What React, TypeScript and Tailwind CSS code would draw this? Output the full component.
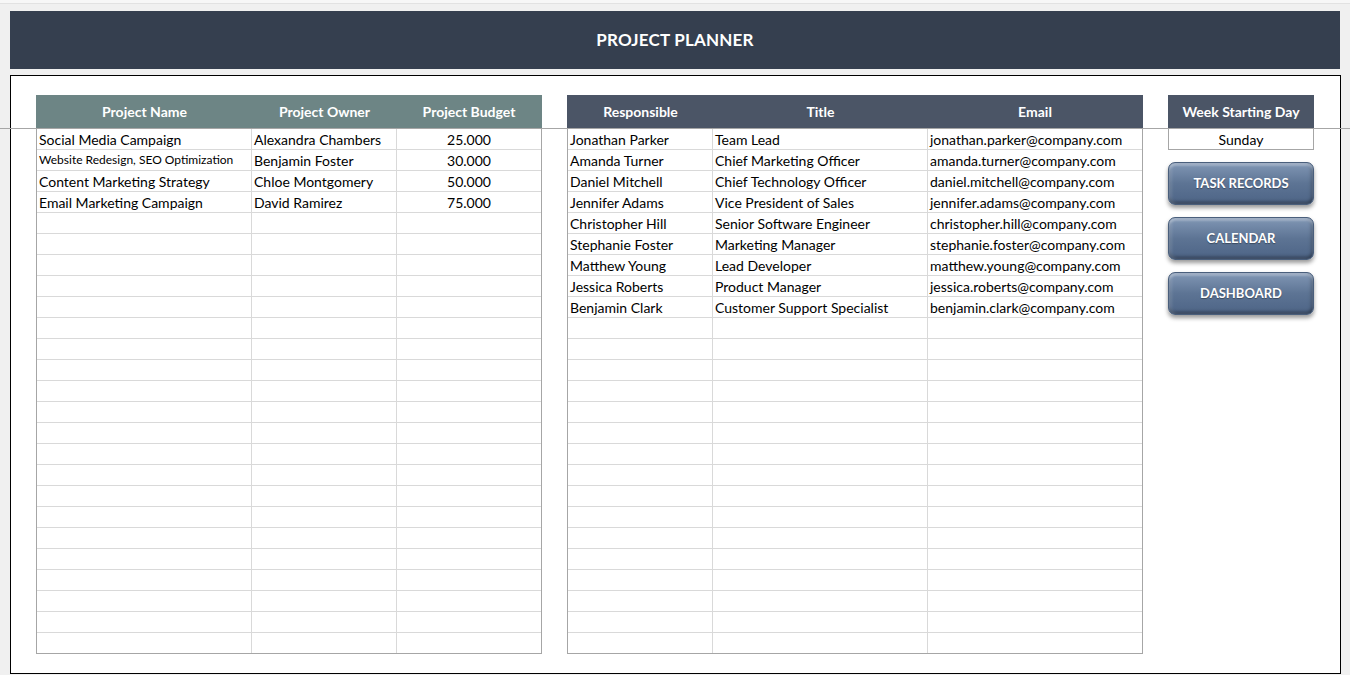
import React from "react";

type Col = { label: string; w: string; align?: "left" | "center" };

const projectCols: Col[] = [
  { label: "Project Name", w: "w-[215px]" },
  { label: "Project Owner", w: "w-[145px]" },
  { label: "Project Budget", w: "w-[144px]", align: "center" },
];

const teamCols: Col[] = [
  { label: "Responsible", w: "w-[145px]" },
  { label: "Title", w: "w-[215px]" },
  { label: "Email", w: "w-[214px]" },
];

const projects = [
  ["Social Media Campaign", "Alexandra Chambers", "25.000"],
  ["Website Redesign, SEO Optimization", "Benjamin Foster", "30.000"],
  ["Content Marketing Strategy", "Chloe Montgomery", "50.000"],
  ["Email Marketing Campaign", "David Ramirez", "75.000"],
];

const team = [
  ["Jonathan Parker", "Team Lead", "jonathan.parker@company.com"],
  ["Amanda Turner", "Chief Marketing Officer", "amanda.turner@company.com"],
  ["Daniel Mitchell", "Chief Technology Officer", "daniel.mitchell@company.com"],
  ["Jennifer Adams", "Vice President of Sales", "jennifer.adams@company.com"],
  ["Christopher Hill", "Senior Software Engineer", "christopher.hill@company.com"],
  ["Stephanie Foster", "Marketing Manager", "stephanie.foster@company.com"],
  ["Matthew Young", "Lead Developer", "matthew.young@company.com"],
  ["Jessica Roberts", "Product Manager", "jessica.roberts@company.com"],
  ["Benjamin Clark", "Customer Support Specialist", "benjamin.clark@company.com"],
];

const ROWS = 25;

const Sheet = ({
  cols,
  data,
  width,
  headerBg,
}: {
  cols: Col[];
  data: string[][];
  width: string;
  headerBg: string;
}) => {
  return (
    <div className={`relative z-10 ${width}`}>
      <div className={`flex h-[33px] items-center ${headerBg}`}>
        <div className="w-px" />
        {cols.map((c) => (
          <div
            key={c.label}
            className={`${c.w} text-center text-[14px] font-bold text-white`}
          >
            {c.label}
          </div>
        ))}
      </div>
      <div className="border border-[#a6a6a6] bg-white">
        {Array.from({ length: ROWS }).map((_, r) => (
          <div
            key={r}
            className="flex h-[21px] border-b border-[#d9d9d9] last:h-[20px] last:border-b-0"
          >
            {cols.map((c, i) => {
              const val = data[r]?.[i] ?? "";
              const small = val.length > 30;
              return (
                <div
                  key={i}
                  className={`${c.w} flex shrink-0 items-center overflow-hidden whitespace-nowrap px-[2px] ${
                    i < cols.length - 1 ? "border-r border-[#d9d9d9]" : ""
                  } ${c.align === "center" ? "justify-center" : ""} ${
                    small ? "text-[12px]" : "text-[14px]"
                  } text-black`}
                >
                  {val}
                </div>
              );
            })}
          </div>
        ))}
      </div>
    </div>
  );
};

const NavButton = ({ label }: { label: string }) => (
  <button className="flex h-[43px] w-[146px] items-center justify-center rounded-[7px] border border-[#4a5f7c] bg-gradient-to-b from-[#8197b5] via-[#5d7494] to-[#4d6486] text-[13px] font-bold text-white shadow-[inset_0_3px_2px_rgba(255,255,255,0.25),inset_3px_0_3px_rgba(255,255,255,0.12),inset_-3px_0_3px_rgba(0,0,0,0.12),inset_0_-3px_3px_rgba(0,0,0,0.25),0_3px_4px_rgba(0,0,0,0.4)] [text-shadow:0_1px_1px_rgba(0,0,0,0.35)]">
    {label}
  </button>
);

export default function App() {
  return (
    <div
      className="relative h-[675px] w-[1350px] overflow-hidden bg-[#f0f0f0]"
      style={{ fontFamily: "Lato, 'Open Sans', sans-serif" }}
    >
      <div className="h-[4px] border-b border-[#e2e2e2] bg-[#f7f7f7]" />
      <div className="px-[10px] pt-[7px]">
        <div className="flex h-[58px] w-[1330px] items-center justify-center bg-[#353f4f]">
          <span className="text-[17px] font-bold tracking-[0.2px] text-white">
            PROJECT PLANNER
          </span>
        </div>
        <div className="mt-[6px] h-[599px] w-[1331px] border border-black bg-white pl-[25px] pt-[19px]">
          <div className="flex items-start gap-[25px]">
            <Sheet
              cols={projectCols}
              data={projects}
              width="w-[506px]"
              headerBg="bg-[#6d8585]"
            />
            <Sheet
              cols={teamCols}
              data={team}
              width="w-[576px]"
              headerBg="bg-[#4b5566]"
            />
            <div className="relative z-10 flex w-[146px] flex-col">
              <div className="flex h-[33px] items-center justify-center bg-[#4b5566] text-[14px] font-bold text-white">
                Week Starting Day
              </div>
              <div className="flex h-[22px] items-center justify-center border border-[#a6a6a6] bg-white text-[14px] text-black">
                Sunday
              </div>
              <div className="mt-[12px] flex flex-col gap-[12px]">
                <NavButton label="TASK RECORDS" />
                <NavButton label="CALENDAR" />
                <NavButton label="DASHBOARD" />
              </div>
            </div>
          </div>
        </div>
      </div>
      <div className="absolute left-0 right-0 top-[128px] z-[5] h-px bg-[#a6a6a6]" />
    </div>
  );
}
